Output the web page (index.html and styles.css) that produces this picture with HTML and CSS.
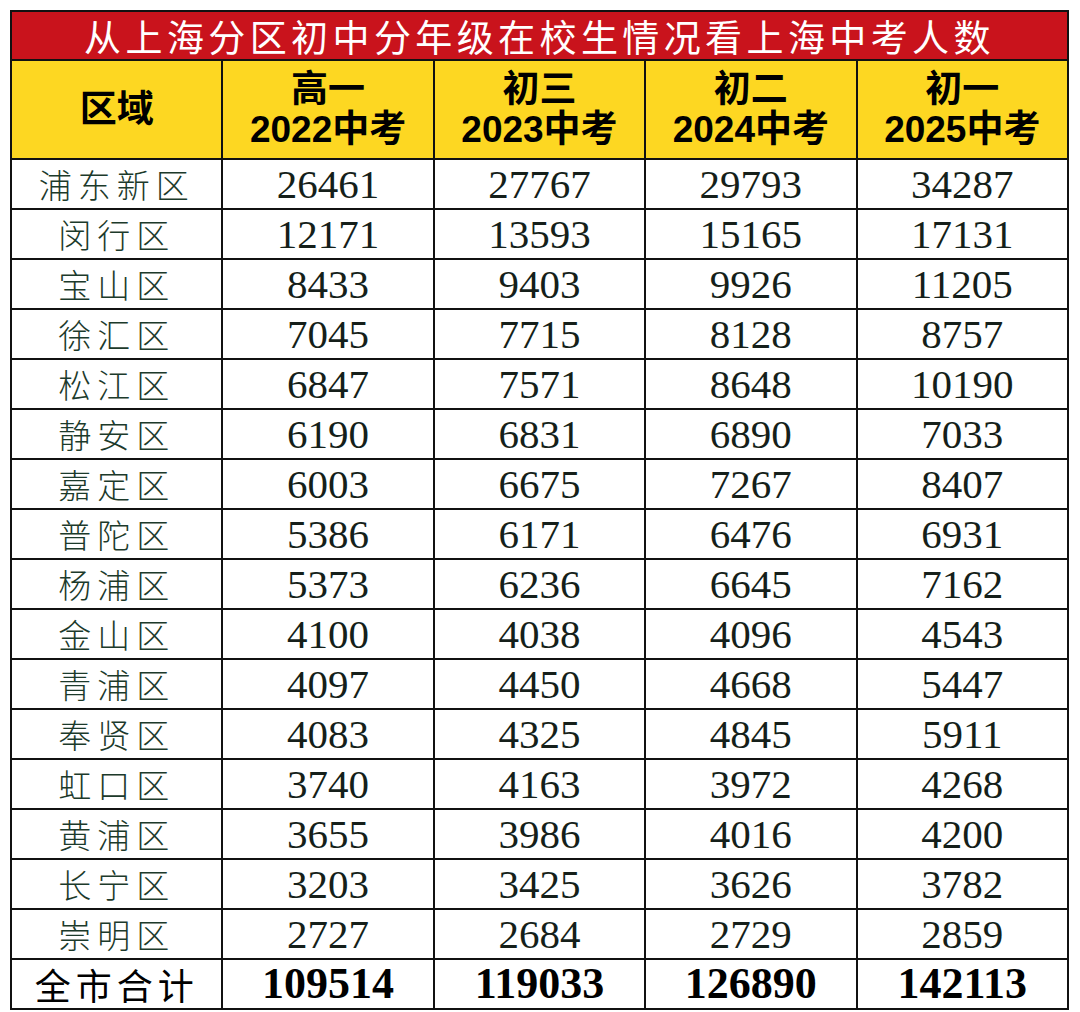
FILE: index.html
```html
<!DOCTYPE html>
<html lang="zh-CN">
<head>
<meta charset="utf-8">
<title>从上海分区初中分年级在校生情况看上海中考人数</title>
<link rel="stylesheet" href="styles.css">
</head>
<body>
<table class="sheet">
  <colgroup>
    <col class="c"><col class="c"><col class="c"><col class="c"><col class="c">
  </colgroup>
  <thead>
    <tr class="title-row"><th colspan="5" class="title">从上海分区初中分年级在校生情况看上海中考人数</th></tr>
    <tr class="head-row">
      <th class="head">区域</th>
      <th class="head">高一<br>2022中考</th>
      <th class="head">初三<br>2023中考</th>
      <th class="head">初二<br>2024中考</th>
      <th class="head">初一<br>2025中考</th>
    </tr>
  </thead>
  <tbody>
    <tr><td class="name">浦东新区</td><td class="num">26461</td><td class="num">27767</td><td class="num">29793</td><td class="num">34287</td></tr>
    <tr><td class="name">闵行区</td><td class="num">12171</td><td class="num">13593</td><td class="num">15165</td><td class="num">17131</td></tr>
    <tr><td class="name">宝山区</td><td class="num">8433</td><td class="num">9403</td><td class="num">9926</td><td class="num">11205</td></tr>
    <tr><td class="name">徐汇区</td><td class="num">7045</td><td class="num">7715</td><td class="num">8128</td><td class="num">8757</td></tr>
    <tr><td class="name">松江区</td><td class="num">6847</td><td class="num">7571</td><td class="num">8648</td><td class="num">10190</td></tr>
    <tr><td class="name">静安区</td><td class="num">6190</td><td class="num">6831</td><td class="num">6890</td><td class="num">7033</td></tr>
    <tr><td class="name">嘉定区</td><td class="num">6003</td><td class="num">6675</td><td class="num">7267</td><td class="num">8407</td></tr>
    <tr><td class="name">普陀区</td><td class="num">5386</td><td class="num">6171</td><td class="num">6476</td><td class="num">6931</td></tr>
    <tr><td class="name">杨浦区</td><td class="num">5373</td><td class="num">6236</td><td class="num">6645</td><td class="num">7162</td></tr>
    <tr><td class="name">金山区</td><td class="num">4100</td><td class="num">4038</td><td class="num">4096</td><td class="num">4543</td></tr>
    <tr><td class="name">青浦区</td><td class="num">4097</td><td class="num">4450</td><td class="num">4668</td><td class="num">5447</td></tr>
    <tr><td class="name">奉贤区</td><td class="num">4083</td><td class="num">4325</td><td class="num">4845</td><td class="num">5911</td></tr>
    <tr><td class="name">虹口区</td><td class="num">3740</td><td class="num">4163</td><td class="num">3972</td><td class="num">4268</td></tr>
    <tr><td class="name">黄浦区</td><td class="num">3655</td><td class="num">3986</td><td class="num">4016</td><td class="num">4200</td></tr>
    <tr><td class="name">长宁区</td><td class="num">3203</td><td class="num">3425</td><td class="num">3626</td><td class="num">3782</td></tr>
    <tr><td class="name">崇明区</td><td class="num">2727</td><td class="num">2684</td><td class="num">2729</td><td class="num">2859</td></tr>
    <tr class="total-row"><td class="total-name">全市合计</td><td class="total">109514</td><td class="total">119033</td><td class="total">126890</td><td class="total">142113</td></tr>
  </tbody>
</table>
</body>
</html>
```

FILE: styles.css
```css
html, body {
  margin: 0;
  padding: 0;
  background: #ffffff;
}

body {
  padding: 10px 0 0 10px;
}

.sheet {
  border-collapse: collapse;
  table-layout: fixed;
  width: 1059px;
  border: 2px solid #111;
}

.c {
  width: 20%;
}

.sheet th,
.sheet td {
  border: 2px solid #111;
  padding: 0;
  text-align: center;
  vertical-align: middle;
  white-space: nowrap;
}

.title-row th {
  height: 47px;
}

.title {
  background: #c9131c;
  color: #ffffff;
  font-family: "Noto Sans CJK SC", sans-serif;
  font-weight: 400;
  font-size: 37px;
  line-height: 40px;
  letter-spacing: 4.4px;
  padding-left: 4px;
}

.head-row th {
  height: 97px;
}

.head {
  background: #fdd722;
  color: #000;
  font-family: "Liberation Sans", "Noto Sans CJK SC", sans-serif;
  font-weight: 700;
  font-size: 37px;
  line-height: 40px;
}

.sheet tbody td {
  height: 48px;
}

.name {
  font-family: "Noto Sans CJK SC", sans-serif;
  font-weight: 300;
  font-size: 33px;
  letter-spacing: 6px;
  padding-left: 6px;
  color: #1c3a2b;
  line-height: 44px;
}

.num {
  font-family: "Liberation Serif", "Times New Roman", serif;
  font-size: 41px;
  color: #151f1a;
  line-height: 44px;
}

.sheet .total-row td {
  height: 48px;
}

.total-name {
  font-family: "Noto Sans CJK SC", sans-serif;
  font-weight: 400;
  font-size: 36px;
  letter-spacing: 5px;
  padding-left: 5px;
  color: #000;
  line-height: 44px;
}

.total {
  font-family: "Liberation Serif", "Times New Roman", serif;
  font-weight: 700;
  font-size: 44px;
  color: #000;
  line-height: 44px;
}
```
